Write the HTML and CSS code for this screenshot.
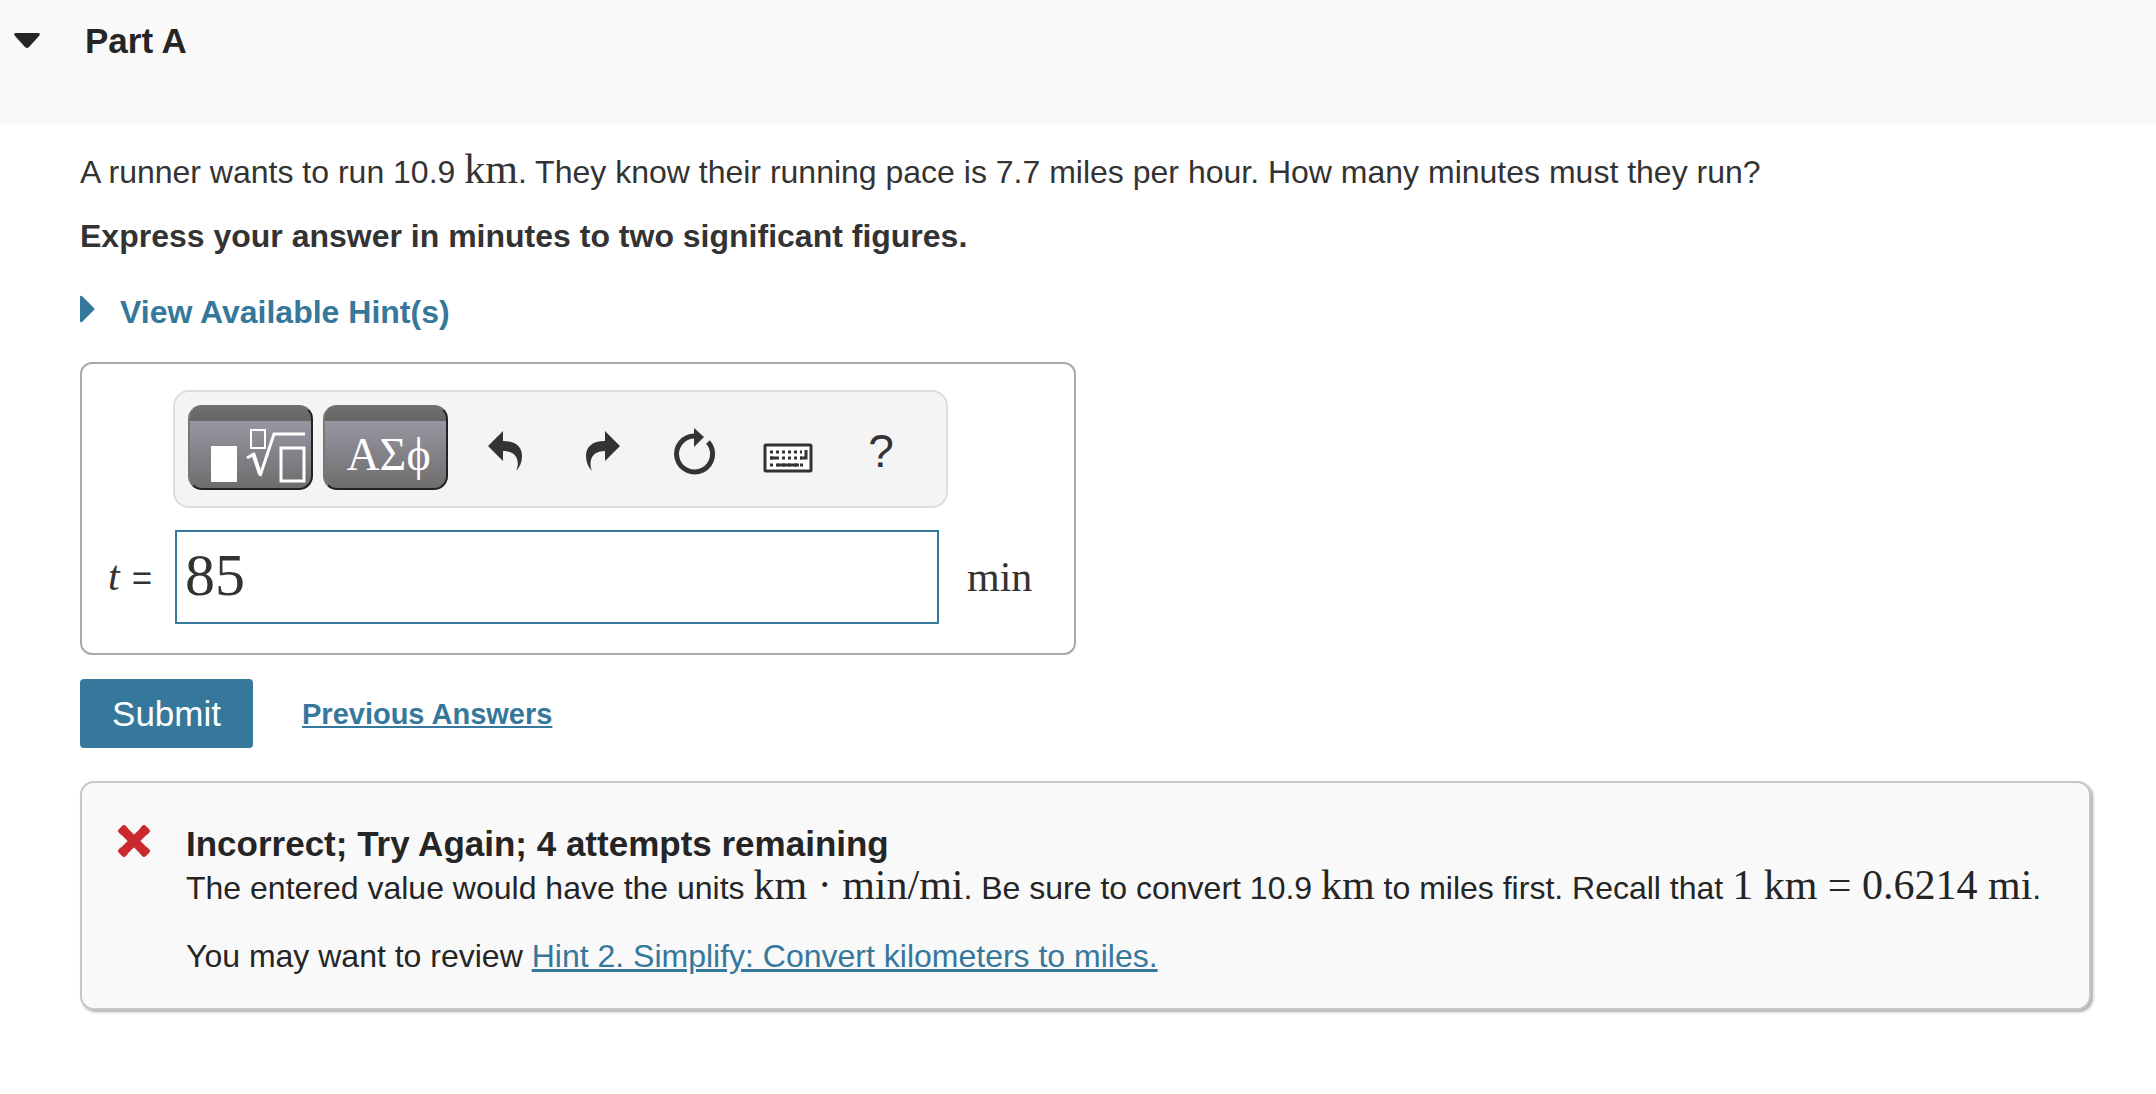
FILE: index.html
```html
<!DOCTYPE html>
<html lang="en">
<head>
    <meta charset="UTF-8">
    <meta name="viewport" content="width=device-width, initial-scale=1.0">
    <title>Part A</title>
    <link rel="stylesheet" href="styles.css">
</head>
<body>
    <header class="part-header">
        <button class="toggle" type="button" aria-label="Collapse Part A">
            <svg width="28" height="16" viewBox="0 0 28 16"><path d="M3 0H25Q28 0 26 3L16 14Q14 16 12 14L2 3Q0 0 3 0Z" fill="#252525"/></svg>
        </button>
        <h1>Part A</h1>
    </header>

    <main class="content">
        <p class="question">A runner wants to run 10.9 <span class="math">km</span>. They know their running pace is 7.7 miles per hour. How many minutes must they run?</p>
        <p class="instructions">Express your answer in minutes to two significant figures.</p>

        <button class="hints" type="button">
            <svg width="15" height="34" viewBox="0 0 15 34"><path d="M0 2Q0 0 2 1L14 13Q15 14 14 15L2 27Q0 28 0 26Z" fill="#35789b"/></svg>
            View Available Hint(s)
        </button>

        <!-- Answer box -->
        <form class="answer">
            <div class="toolbar">
                <button class="palette" type="button" aria-label="Templates">
                    <svg width="121" height="81" viewBox="0 0 121 81" fill="none" stroke="#fff">
                        <path d="M21 39H47V75H21Z" fill="#fff" stroke="none"/>
                        <path d="M61 23H75V41H61Z" stroke-width="2"/>
                        <path d="M57 51L64 47" stroke-width="3"/>
                        <path d="M63 46L70 67" stroke-width="4"/>
                        <path d="M70 69L84 27H115" stroke-width="3"/>
                        <path d="M91 41H114V74H91Z" stroke-width="3"/>
                    </svg>
                </button>
                <button class="palette greek" type="button">ΑΣϕ</button>
                <button class="tool" type="button" aria-label="Undo">
                    <svg width="94" height="85" viewBox="0 0 94 85"><path d="M45 26V36C58 36 64 42 64 51C64 57 62 62 58 66C62 58 60 46 45 46V56L30 41Z" fill="#333"/></svg>
                </button>
                <button class="tool" type="button" aria-label="Redo">
                    <svg width="94" height="85" viewBox="0 0 94 85"><path d="M53 26V36C40 36 34 42 34 51C34 57 36 62 40 66C37 58 38 46 53 46V56L68 41Z" fill="#333"/></svg>
                </button>
                <button class="tool" type="button" aria-label="Reset">
                    <svg width="94" height="85" viewBox="0 0 94 85"><path d="M62 37A18 18 0 1 1 49 31" fill="none" stroke="#333" stroke-width="5"/><path d="M48 23V42L58 32Z" fill="#333"/></svg>
                </button>
                <button class="tool" type="button" aria-label="Keyboard shortcuts">
                    <svg width="94" height="85" viewBox="0 0 94 85">
                        <rect x="25" y="40" width="46" height="26" rx="1" fill="#fff" stroke="#333" stroke-width="3"/>
                        <path d="M30 47H62M30 53H62M30 60H66" fill="none" stroke="#333" stroke-width="3" stroke-dasharray="3 3"/>
                        <path d="M37 60H59M30 53H36M66 45V53H60" fill="none" stroke="#333" stroke-width="3"/>
                    </svg>
                </button>
                <button class="tool help" type="button" aria-label="Help">?</button>
            </div>
            <label class="variable" for="answer"><i>t</i> =</label>
            <input class="field" id="answer" type="text" value="85">
            <span class="unit">min</span>
        </form>

        <div class="actions">
            <button class="submit" type="button">Submit</button>
            <a class="previous" href="#">Previous Answers</a>
        </div>

        <!-- Feedback -->
        <section class="feedback">
            <svg class="wrong" width="34" height="34" viewBox="0 0 34 34"><path d="M7 7L27 27M27 7L7 27" stroke="#ca2a2d" stroke-width="9" stroke-linecap="square"/><path d="M5 7L7 5M27 5L29 7M29 27L27 29M7 29L5 27" stroke="#ca2a2d" stroke-width="7" stroke-linecap="round"/></svg>
            <div class="feedback-text">
                <h2>Incorrect; Try Again; 4 attempts remaining</h2>
                <p>The entered value would have the units <span class="math">km · min/mi</span>. Be sure to convert 10.9 <span class="math">km</span> to miles first. Recall that <span class="math">1 km = 0.6214 mi</span>.</p>
                <p class="review">You may want to review <a href="#">Hint 2. Simplify: Convert kilometers to miles.</a></p>
            </div>
        </section>
    </main>
</body>
</html>
```

FILE: styles.css
```css
* {
    box-sizing: border-box;
}

body {
    margin: 0;
    background: #fff;
    color: #333;
    font-family: "Liberation Sans", Arial, sans-serif;
    font-size: 32px;
    line-height: 40px;
}

h1, h2, p {
    margin: 0;
}

button {
    padding: 0;
    border: none;
    background: none;
    color: inherit;
    font: inherit;
    cursor: pointer;
}

svg {
    display: block;
}

a {
    color: #35789b;
}

.part-header {
    display: flex;
    align-items: flex-start;
    gap: 44px;
    height: 124px;
    padding: 21px 13px;
    background: #f9f9f9;
}

.toggle {
    display: flex;
    align-items: center;
    height: 40px;
}

h1, h2 {
    color: #252525;
    font-size: 35px;
}

.content {
    padding: 28px 65px 28px 80px;
}

.math {
    font-family: "Liberation Serif", serif;
    font-size: 42px;
    line-height: 0;
}

.instructions {
    margin-top: 24px;
    font-weight: bold;
}

.hints {
    display: flex;
    align-items: center;
    gap: 25px;
    margin-top: 36px;
    color: #35789b;
    font-weight: bold;
}

.answer {
    display: grid;
    grid-template-columns: 65px 766px 1fr;
    align-items: center;
    width: 996px;
    margin-top: 30px;
    padding: 26px 26px 29px;
    border: 2px solid #a9a9a9;
    border-radius: 12px;
    row-gap: 22px;
}

.toolbar {
    grid-column: 2 / 4;
    justify-self: start;
    display: flex;
    width: 775px;
    padding: 13px 13px 16px;
    border: 2px solid #ddd;
    border-radius: 16px;
    background: #f4f4f4;
}

.palette {
    width: 125px;
    height: 85px;
    margin-right: 10px;
    border: 2px solid #222;
    border-top-color: #707070;
    border-left-color: #777;
    border-radius: 14px;
    background: linear-gradient(#6f6f6f, #656565 14px, #9996a2 14px, #6d6d6d);
    color: #fff;
}

.greek {
    padding: 14px 0 0 6px;
    font-family: "Liberation Serif", serif;
    font-size: 46px;
}

.tool {
    width: 94px;
    height: 85px;
}

.help {
    padding-top: 6px;
    font-size: 46px;
}

.variable {
    display: flex;
    align-items: baseline;
    gap: 12px;
    font-size: 35px;
}

.variable i {
    font-family: "Liberation Serif", serif;
    font-size: 42px;
}

.field {
    height: 94px;
    margin-left: 2px;
    padding: 0 8px 4px;
    border: 2px solid #35789b;
    outline: none;
    color: #333;
    font-family: "Liberation Serif", serif;
    font-size: 60px;
}

.unit {
    padding-left: 28px;
    font-family: "Liberation Serif", serif;
    font-size: 42px;
}

.actions {
    display: flex;
    align-items: center;
    gap: 49px;
    margin-top: 24px;
}

.submit {
    width: 173px;
    height: 69px;
    border-radius: 4px;
    background: #35789b;
    color: #fff;
    font-size: 35px;
}

.previous {
    font-size: 29px;
    font-weight: bold;
}

.feedback {
    display: flex;
    gap: 35px;
    margin-top: 33px;
    padding: 41px 32px 32px 35px;
    border: 2px solid #c8c8c8;
    border-radius: 14px;
    background: #f9f9f9;
    box-shadow: 2px 2px 3px #aaa;
    color: #252525;
}

.wrong {
    flex: none;
}

.feedback-text {
    flex: 1;
}

.feedback h2 {
    margin-bottom: 4px;
}

.review {
    margin-top: 28px;
}
```
